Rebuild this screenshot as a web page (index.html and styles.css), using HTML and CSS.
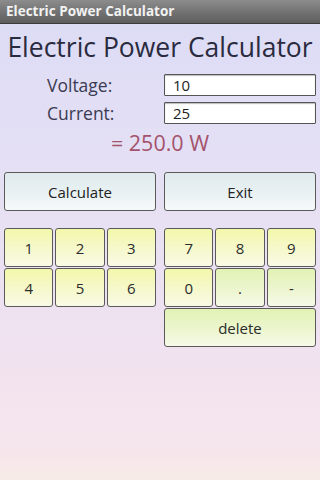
FILE: index.html
```html
<!DOCTYPE html>
<html>
<head>
<meta charset="utf-8">
<link rel="stylesheet" href="styles.css">
</head>
<body>
<div class="titlebar">Electric Power Calculator</div>
<main class="content">
  <h1 class="heading">Electric Power Calculator</h1>
  <div class="form">
    <label class="label">Voltage:</label>
    <div class="input">10</div>
    <label class="label">Current:</label>
    <div class="input">25</div>
  </div>
  <div class="result">= 250.0 W</div>
  <div class="actions">
    <button class="btn">Calculate</button>
    <button class="btn">Exit</button>
  </div>
  <div class="pads">
    <div class="pad">
      <button class="key">1</button>
      <button class="key">2</button>
      <button class="key">3</button>
      <button class="key">4</button>
      <button class="key">5</button>
      <button class="key">6</button>
    </div>
    <div class="pad">
      <button class="key">7</button>
      <button class="key">8</button>
      <button class="key">9</button>
      <button class="key">0</button>
      <button class="key green">.</button>
      <button class="key green">-</button>
      <button class="key green wide">delete</button>
    </div>
  </div>
</main>
</body>
</html>
```
FILE: styles.css
```css
html, body {
  margin: 0;
  padding: 0;
  height: 100%;
}
body {
  font-family: "Open Sans", "DejaVu Sans", sans-serif;
  background: linear-gradient(180deg, #dcdcf6 0%, #e6e0f4 40%, #f1e2ef 75%, #f6e6ec 95%, #f6ece6 100%);
  width: 320px;
  height: 480px;
  overflow: hidden;
}
.titlebar {
  height: 23px;
  line-height: 22px;
  background: linear-gradient(180deg, #8c8c8c 0%, #6f6f6f 60%, #5e5e5e 100%);
  border-bottom: 1px solid #3c3c3c;
  color: #f2f2f2;
  font-weight: bold;
  font-size: 13.5px;
  padding-left: 6px;
  font-family: "Open Sans", "DejaVu Sans", sans-serif;
}
.content {
  padding: 0 4px;
}
.heading {
  margin: 5px 0 0 0;
  font-weight: normal;
  font-size: 26.5px;
  line-height: 36px;
  color: #2a2b3e;
  text-align: center;
  letter-spacing: 0;
}
.form {
  display: grid;
  grid-template-columns: 160px 152px;
  row-gap: 6px;
  margin-top: 9px;
  align-items: center;
}
.label {
  font-size: 17.5px;
  color: #3a3b52;
  padding-left: 43px;
  line-height: 22px;
}
.input {
  height: 20px;
  border: 1px solid #555;
  border-radius: 1px;
  background: #fff;
  font-size: 15px;
  line-height: 21px;
  color: #1e1e1e;
  padding-left: 8px;
  box-shadow: inset 0 1px 1px #bbb;
}
.result {
  margin-top: 4px;
  text-align: center;
  font-size: 21.5px;
  line-height: 30px;
  color: #a3536c;
}
.actions {
  display: grid;
  grid-template-columns: 152px 152px;
  column-gap: 8px;
  margin-top: 14px;
}
.btn {
  height: 39px;
  border: 1.5px solid #5a5a5a;
  border-radius: 3px;
  background: linear-gradient(180deg, #dfeaee 0%, #e8f0f2 50%, #f6f9fa 100%);
  font-family: "Open Sans", "DejaVu Sans", sans-serif;
  font-size: 15px;
  color: #222;
  padding: 0;
}
.pads {
  display: grid;
  grid-template-columns: 152px 152px;
  column-gap: 8px;
  margin-top: 17px;
  align-items: start;
}
.pad {
  display: grid;
  grid-template-columns: repeat(3, 1fr);
  gap: 1px 2px;
}
.key {
  height: 39px;
  border: 1.5px solid #5a5a5a;
  border-radius: 3px;
  background: linear-gradient(180deg, #f3f7ab 0%, #f5f8c6 45%, #f9fae6 100%);
  font-family: "Open Sans", "DejaVu Sans", sans-serif;
  font-size: 15px;
  color: #2c2c2c;
  padding: 0;
}
.key.green {
  background: linear-gradient(180deg, #e2f2b4 0%, #ebf5cc 50%, #f6fae8 100%);
}
.key.wide {
  grid-column: 1 / -1;
}
```
